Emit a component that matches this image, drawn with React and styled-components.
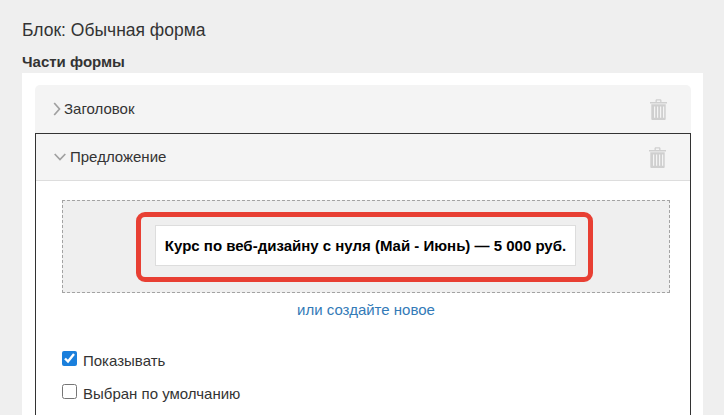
import React from "react";
import styled, { createGlobalStyle } from "styled-components";

const Global = createGlobalStyle`
  html, body { margin: 0; padding: 0; height: 100%; overflow: hidden; background: #efefef; }
  body { font-family: "Liberation Sans", Arial, sans-serif; color: #333; }
`;
const Page = styled.div`
  height: 415px;
  overflow: hidden;
  padding: 20px 21px 0 22px;
  box-sizing: border-box;
`;
const Title = styled.h1`
  margin: 0;
  font-size: 17.5px;
  line-height: 20px;
  font-weight: 400;
`;
const SectionLabel = styled.h2`
  margin: 13px 0 0;
  font-size: 15px;
  line-height: 18px;
  font-weight: 700;
`;
const Panel = styled.div`
  margin-top: 2px;
  background: #fff;
  padding: 12px 12px 0 13px;
  height: 400px;
`;
const CollapsedCard = styled.div`
  height: 48px;
  box-sizing: border-box;
  background: #f4f4f4;
  border-radius: 5px 5px 0 0;
  display: flex;
  align-items: center;
  padding: 0 24px 0 18px;
`;
const OpenCard = styled.div`
  border: 1px solid #333;
  border-bottom: 0;
`;
const OpenHeader = styled.div`
  height: 47px;
  box-sizing: border-box;
  background: #f4f4f4;
  border-bottom: 1px solid #ddd;
  display: flex;
  align-items: center;
  padding: 0 24px 0 18px;
`;
const Name = styled.span`
  flex: 1;
  font-size: 15px;
  line-height: 18px;
  margin-left: ${(p) => p.$gap}px;
`;
const Body = styled.div`
  padding: 19px 20px 60px 26px;
`;
const Drop = styled.div`
  height: 93px;
  box-sizing: border-box;
  border: 1px dashed #a3a3a3;
  background: #efefef;
  display: flex;
  align-items: center;
  justify-content: center;
  padding-right: 3px;
`;
const Frame = styled.div`
  border: 5px solid #e83f33;
  border-radius: 9px;
  padding: 8px 12px 11px 14px;
  display: flex;
`;
const Offer = styled.div`
  background: #fff;
  border: 1px solid #ddd;
  height: 41px;
  box-sizing: border-box;
  padding: 0 9px;
  display: flex;
  align-items: center;
  font-size: 15px;
  font-weight: 700;
  color: #000;
  white-space: nowrap;
`;
const CreateLink = styled.a`
  display: block;
  margin-top: 8px;
  text-align: center;
  font-size: 15px;
  line-height: 18px;
  color: #337ab7;
  text-decoration: none;
`;
const CheckRow = styled.label`
  display: flex;
  align-items: center;
  height: 18px;
  font-size: 15px;
  margin-top: ${(p) => p.$top}px;
`;
const Check = styled.input`
  width: 15px;
  height: 15px;
  margin: 0 6px 3px 0;
  flex: none;
  accent-color: #1a7fdc;
`;
const Chevron = ({ open }) => (
  <svg width={open ? 12 : 8} height={open ? 8 : 14} viewBox={open ? "0 0 12 8" : "0 0 8 14"} fill="none" stroke="#a0a0a0" strokeWidth="1.7">
    <path d={open ? "M.7 1l5.3 5.5L11.3 1" : "M1.2 1l5.3 6-5.3 6"} />
  </svg>
);
const Trash = () => (
  <svg width="17" height="21" viewBox="0 0 17 21" fill="#cfcfcf">
    <path d="M5.5 3V1.6C5.5.8 6.2.3 7 .3h3c.8 0 1.5.5 1.5 1.3V3H17v1.4H0V3h5.5zM6.8 3h3.4V1.6H6.8V3z" />
    <path fillRule="evenodd" d="M1.3 5.3h14.4V20a1 1 0 0 1-1 1H2.3a1 1 0 0 1-1-1V5.3zM4 7.5h1.2v11.3H4V7.5zm3 0h1.2v11.3H7V7.5zm3 0h1.2v11.3H10V7.5zm3 0h1.2v11.3H13V7.5z" />
  </svg>
);

export default function App() {
  return (
    <Page>
      <Global />
      <Title>Блок: Обычная форма</Title>
      <SectionLabel>Части формы</SectionLabel>
      <Panel>
        <CollapsedCard>
          <Chevron />
          <Name $gap={3}>Заголовок</Name>
          <Trash />
        </CollapsedCard>
        <OpenCard>
          <OpenHeader>
            <Chevron open />
            <Name $gap={4}>Предложение</Name>
            <Trash />
          </OpenHeader>
          <Body>
            <Drop>
              <Frame>
                <Offer>Курс по веб-дизайну с нуля (Май - Июнь) — 5 000 руб.</Offer>
              </Frame>
            </Drop>
            <CreateLink href="#">или создайте новое</CreateLink>
            <CheckRow $top={32}>
              <Check type="checkbox" defaultChecked />
              Показывать
            </CheckRow>
            <CheckRow $top={15}>
              <Check type="checkbox" />
              Выбран по умолчанию
            </CheckRow>
          </Body>
        </OpenCard>
      </Panel>
    </Page>
  );
}
